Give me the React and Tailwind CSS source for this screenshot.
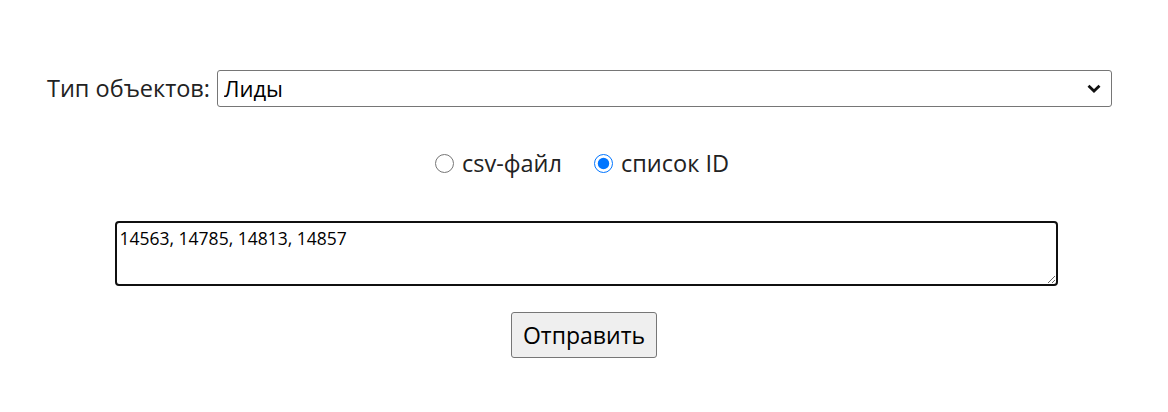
import React, { useState } from 'react';

const App = () => {
  const [objectType, setObjectType] = useState('leads');
  const [source, setSource] = useState('ids');
  const [ids, setIds] = useState('14563, 14785, 14813, 14857');

  return (
    <div className="w-[1168px] h-[412px] bg-white text-black font-['Open_Sans',sans-serif]">
      <div className="flex flex-col items-center pt-[70px]">
        {/* Object type */}
        <div className="flex items-center ml-[-9px]">
          <label className="text-[23.5px] text-[#222] mr-[7px]">Тип объектов:</label>
          <div className="relative">
            <select
              value={objectType}
              onChange={(e) => setObjectType(e.target.value)}
              className="appearance-none w-[895px] h-[37px] pl-[6px] border border-[#767676] rounded-[3px] bg-white text-[22px] text-black outline-none"
            >
              <option value="leads">Лиды</option>
              <option value="deals">Сделки</option>
              <option value="contacts">Контакты</option>
            </select>
            <svg
              className="absolute right-[11px] top-[14px] pointer-events-none"
              width="14"
              height="10"
              viewBox="0 0 14 10"
            >
              <path d="M1.5 1.8 L7 7 L12.5 1.8" fill="none" stroke="#111" strokeWidth="2.8" />
            </svg>
          </div>
        </div>

        {/* Source */}
        <div className="flex items-center mt-[40px] ml-[-4px] text-[23.5px] text-[#222] leading-[32px]">
          <label className="flex items-center">
            <input
              type="radio"
              name="source"
              checked={source === 'csv'}
              onChange={() => setSource('csv')}
              className="w-[19px] h-[19px] m-0 accent-[#0075ff]"
            />
            <span className="ml-[8px]">csv-файл</span>
          </label>
          <label className="flex items-center ml-[32px]">
            <input
              type="radio"
              name="source"
              checked={source === 'ids'}
              onChange={() => setSource('ids')}
              className="w-[19px] h-[19px] m-0 accent-[#0075ff]"
            />
            <span className="ml-[8px]">список ID</span>
          </label>
        </div>

        {/* IDs */}
        <textarea
          value={ids}
          onChange={(e) => setIds(e.target.value)}
          className="mt-[42px] ml-[4px] w-[943px] h-[65px] border-[2.5px] border-[#101010] rounded-[4px] px-[3px] py-[5px] text-[17.5px] leading-[21px] text-black outline-none resize-y font-['Open_Sans',sans-serif]"
        />

        <button className="mt-[26px] h-[46px] px-[11px] bg-[#efefef] border border-[#767676] rounded-[3px] text-[23px] text-black">
          Отправить
        </button>
      </div>
    </div>
  );
};

export default App;
